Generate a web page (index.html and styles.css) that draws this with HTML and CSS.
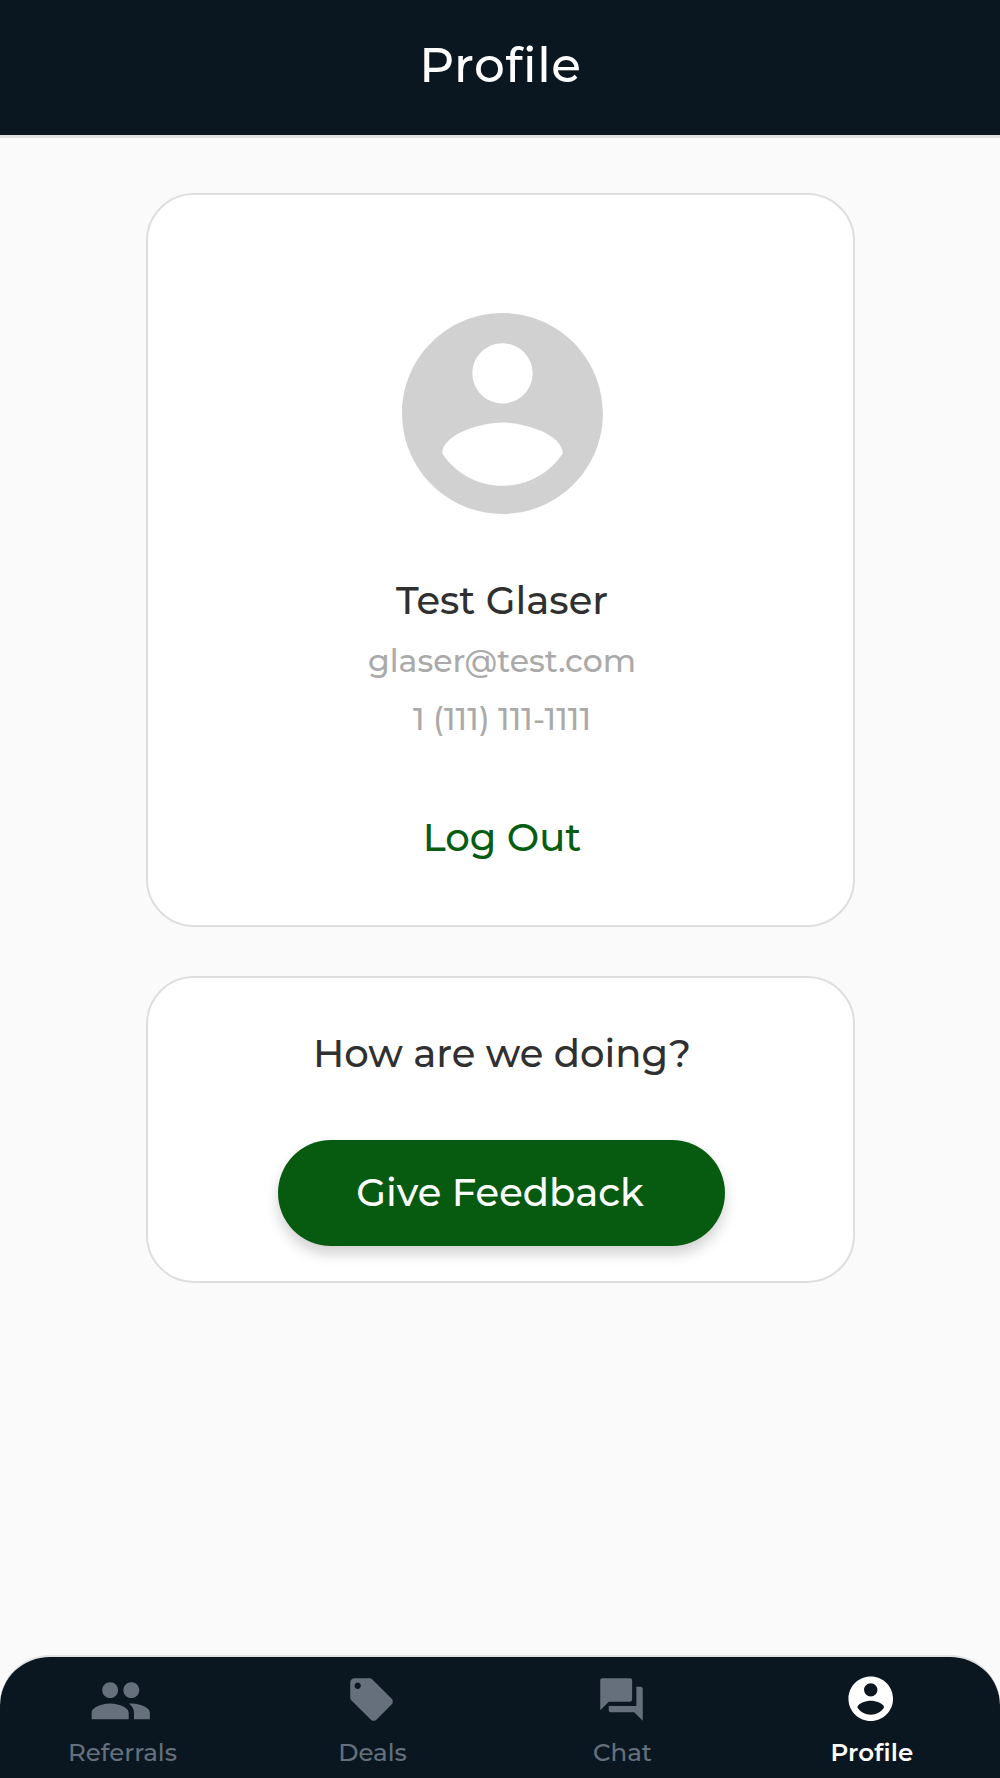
FILE: index.html
```html
<!DOCTYPE html>
<html lang="en">
<head>
    <meta charset="UTF-8">
    <meta name="viewport" content="width=device-width, initial-scale=1.0">
    <title>Profile</title>
    <link rel="stylesheet" href="styles.css">
</head>
<body>

<header class="header">
    <h1>Profile</h1>
</header>

<main class="content">
    <!-- User info -->
    <section class="card user-card">
        <svg class="avatar" viewBox="0 0 24 24">
            <path d="M12 2C6.48 2 2 6.48 2 12s4.48 10 10 10 10-4.48 10-10S17.52 2 12 2zm0 3c1.66 0 3 1.34 3 3s-1.34 3-3 3-3-1.34-3-3 1.34-3 3-3zm0 14.2c-2.5 0-4.71-1.28-6-3.22.03-1.99 4-3.08 6-3.08 1.99 0 5.97 1.09 6 3.08-1.29 1.94-3.5 3.22-6 3.22z"/>
        </svg>
        <h2 class="user-name">Test Glaser</h2>
        <p class="user-email">glaser@test.com</p>
        <p class="user-phone">1 (111) 111-1111</p>
        <button class="logout">Log Out</button>
    </section>

    <!-- Feedback -->
    <section class="card feedback-card">
        <h2>How are we doing?</h2>
        <button class="feedback-button">Give Feedback</button>
    </section>
</main>

<!-- Bottom tabs -->
<nav class="tab-bar">
    <a class="tab">
        <span class="tab-icon">
            <svg class="icon-people" viewBox="0 0 24 24">
                <path d="M16 11c1.66 0 2.99-1.34 2.99-3S17.66 5 16 5c-1.66 0-3 1.34-3 3s1.34 3 3 3zm-8 0c1.66 0 2.99-1.34 2.99-3S9.66 5 8 5C6.34 5 5 6.34 5 8s1.34 3 3 3zm0 2c-2.33 0-7 1.17-7 3.5V19h14v-2.5c0-2.33-4.67-3.5-7-3.5zm8 0c-.29 0-.62.02-.97.05 1.16.84 1.97 1.97 1.97 3.45V19h6v-2.5c0-2.33-4.67-3.5-7-3.5z"/>
            </svg>
        </span>
        <span class="tab-label">Referrals</span>
    </a>
    <a class="tab">
        <span class="tab-icon">
            <svg class="icon" viewBox="0 0 24 24">
                <path d="M21.41 11.58l-9-9C12.05 2.22 11.55 2 11 2H4c-1.1 0-2 .9-2 2v7c0 .55.22 1.05.59 1.42l9 9c.36.36.86.58 1.41.58.55 0 1.05-.22 1.41-.59l7-7c.37-.36.59-.86.59-1.41 0-.55-.23-1.06-.59-1.42zM5.5 7C4.67 7 4 6.33 4 5.5S4.67 4 5.5 4 7 4.67 7 5.5 6.33 7 5.5 7z"/>
            </svg>
        </span>
        <span class="tab-label">Deals</span>
    </a>
    <a class="tab">
        <span class="tab-icon">
            <svg class="icon" viewBox="0 0 24 24">
                <path d="M21 6h-2v9H6v2c0 .55.45 1 1 1h11l4 4V7c0-.55-.45-1-1-1zm-4 6V3c0-.55-.45-1-1-1H3c-.55 0-1 .45-1 1v14l4-4h10c.55 0 1-.45 1-1z"/>
            </svg>
        </span>
        <span class="tab-label">Chat</span>
    </a>
    <a class="tab active">
        <span class="tab-icon">
            <svg class="icon-account" viewBox="0 0 24 24">
                <path d="M12 2C6.48 2 2 6.48 2 12s4.48 10 10 10 10-4.48 10-10S17.52 2 12 2zm0 3c1.66 0 3 1.34 3 3s-1.34 3-3 3-3-1.34-3-3 1.34-3 3-3zm0 14.2c-2.5 0-4.71-1.28-6-3.22.03-1.99 4-3.08 6-3.08 1.99 0 5.97 1.09 6 3.08-1.29 1.94-3.5 3.22-6 3.22z"/>
            </svg>
        </span>
        <span class="tab-label">Profile</span>
    </a>
</nav>

</body>
</html>
```

FILE: styles.css
```css
* {
    box-sizing: border-box;
    margin: 0;
    padding: 0;
}

body {
    font-family: Montserrat, Inter, sans-serif;
    font-variant-ligatures: none;
    background-color: #fafafa;
    color: #303030;
    min-height: 100vh;
    display: flex;
    flex-direction: column;
}

h1, h2 {
    font-weight: 500;
}

button {
    font-family: inherit;
    border: none;
    background: none;
    cursor: pointer;
}

.header {
    height: 138px;
    padding: 0 0 7px 1px;
    background-color: #0a1721;
    border-bottom: 3px solid #e0e0e0;
    display: flex;
    align-items: center;
    justify-content: center;
}

.header h1 {
    color: #fff;
    font-size: 48.5px;
    letter-spacing: 0.6px;
}

.content {
    flex: 1;
    display: flex;
    flex-direction: column;
    align-items: center;
    gap: 49px;
    padding-top: 55px;
}

.card {
    width: 709px;
    background-color: #fff;
    border: 2px solid #dedede;
    border-radius: 48px;
    display: flex;
    flex-direction: column;
    align-items: center;
}

.user-card {
    height: 734px;
    padding: 98px 0 0 4px;
}

.avatar {
    width: 241px;
    height: 241px;
    fill: #d1d1d1;
}

.user-name {
    margin-top: 45px;
    font-size: 38.6px;
    line-height: 44px;
}

.user-email,
.user-phone {
    margin-top: 18px;
    color: #aaa;
    font-size: 31.5px;
    font-weight: 500;
    line-height: 40px;
}

.logout {
    margin-top: 77px;
    color: #065d10;
    font-size: 38.6px;
    font-weight: 500;
    line-height: 44px;
}

.feedback-card {
    height: 307px;
    padding: 54px 0 0 3px;
}

.feedback-card h2 {
    padding-left: 1px;
    font-size: 38.6px;
    line-height: 44px;
}

.feedback-button {
    width: 447px;
    height: 106px;
    margin-top: 64px;
    padding: 0 3px 2px 0;
    border-radius: 53px;
    background-color: #065b10;
    color: #fff;
    font-size: 38.6px;
    font-weight: 500;
    box-shadow: 0 8px 14px rgba(0, 0, 0, 0.18);
}

/* Bottom tabs */
.tab-bar {
    height: 123px;
    background-color: #0a1721;
    border-top: 2px solid #dfe1e2;
    border-radius: 50px 50px 0 0;
    display: flex;
}

.tab {
    flex: 1;
    padding: 10px 5px 0 0;
    color: #65707c;
    display: flex;
    flex-direction: column;
    align-items: center;
}

.tab-icon {
    width: 64px;
    height: 64px;
    display: flex;
    align-items: center;
    justify-content: center;
}

.tab-icon svg {
    flex-shrink: 0;
    fill: currentColor;
}

.icon-people {
    width: 63.5px;
    height: 63.5px;
    margin: 3px 3px 0 0;
}

.icon {
    width: 51px;
    height: 51px;
    margin-right: 2px;
}

.icon-account {
    width: 53.5px;
    height: 53.5px;
    margin: 0 4px 1px 0;
}

.tab-label {
    margin-top: 6px;
    font-size: 24.5px;
    font-weight: 500;
    line-height: 30px;
}

.active {
    color: #fff;
}

.active .tab-label {
    padding-right: 1px;
    font-weight: 600;
    letter-spacing: 0.2px;
}
```
